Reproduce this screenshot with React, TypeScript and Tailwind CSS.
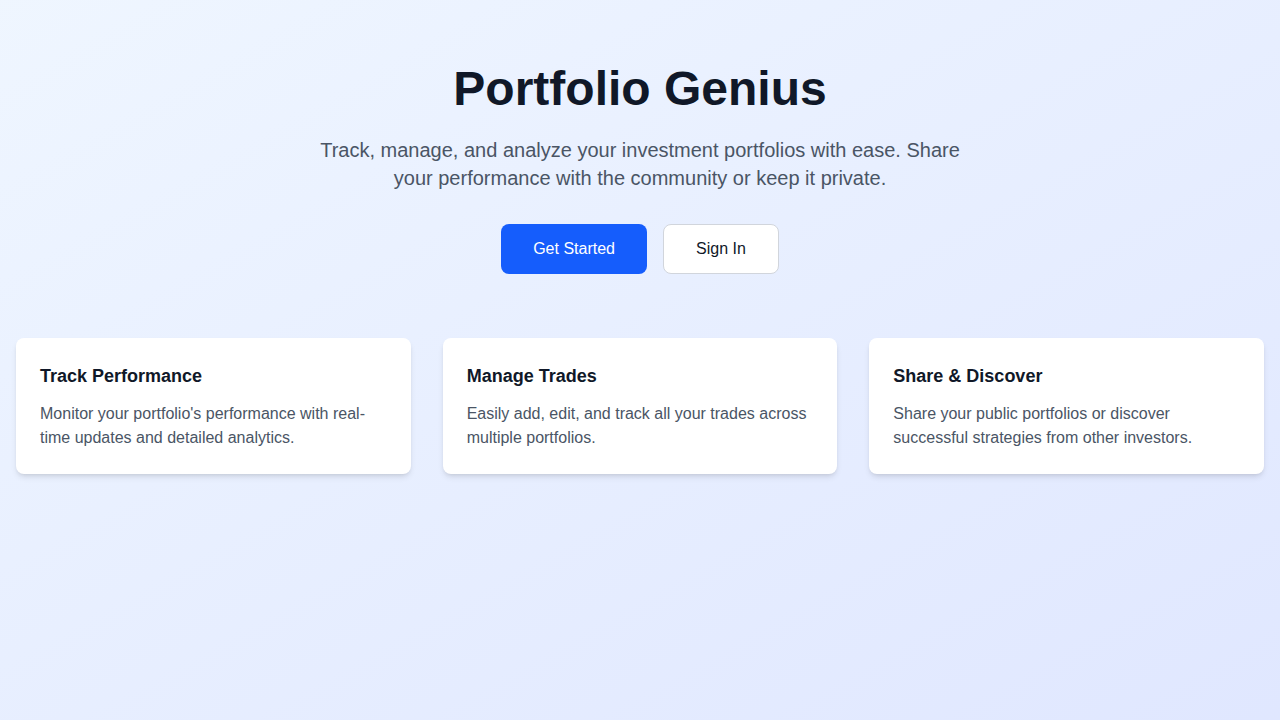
export default function App() {
  const cards = [
    {
      t: "Track Performance",
      d: "Monitor your portfolio's performance with real-time updates and detailed analytics.",
    },
    {
      t: "Manage Trades",
      d: "Easily add, edit, and track all your trades across multiple portfolios.",
    },
    {
      t: "Share & Discover",
      d: "Share your public portfolios or discover successful strategies from other investors.",
    },
  ];
  return (
    <div
      className="min-h-screen bg-linear-to-br from-blue-50 to-indigo-100"
      style={{ fontFamily: '"Liberation Sans", Arial, sans-serif' }}
    >
      <div className="mx-auto max-w-7xl px-4 pt-[65px] pb-16">
        <div className="text-center">
          <h1 className="mb-[23px] text-5xl font-bold leading-none text-gray-900">Portfolio Genius</h1>
          <p className="mx-auto max-w-2xl text-xl text-gray-600">
            Track, manage, and analyze your investment portfolios with ease. Share your performance with the
            community or keep it private.
          </p>
          <div className="mt-8 flex justify-center gap-4">
            <button className="rounded-lg bg-blue-600 px-8 py-3 text-base text-white">Get Started</button>
            <button className="rounded-lg border border-gray-300 bg-white px-8 py-3 text-base text-gray-900">
              Sign In
            </button>
          </div>
        </div>
        <div className="mt-16 grid grid-cols-3 gap-8">
          {cards.map((c) => (
            <div key={c.t} className="rounded-lg bg-white p-6 shadow-md">
              <h3 className="mb-3 text-lg font-semibold text-gray-900">{c.t}</h3>
              <p className="text-base text-gray-600">{c.d}</p>
            </div>
          ))}
        </div>
      </div>
    </div>
  );
}
